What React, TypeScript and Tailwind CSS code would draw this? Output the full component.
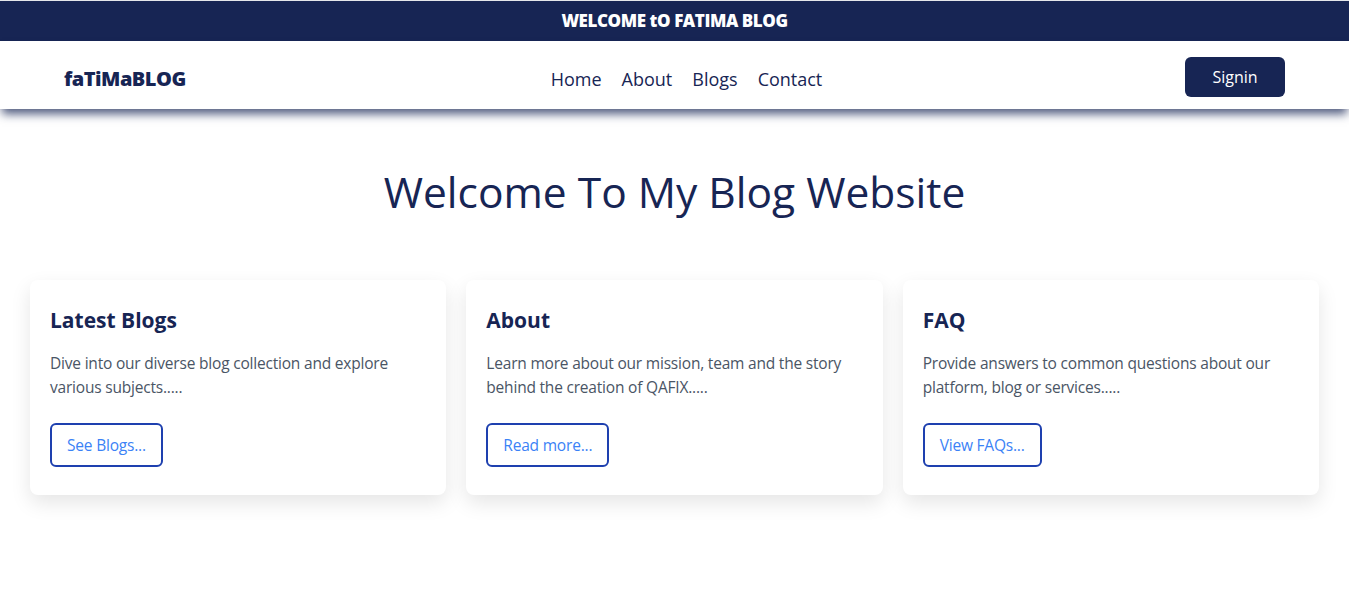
import React from 'react'

const cards = [
  {
    title: 'Latest Blogs',
    text: 'Dive into our diverse blog collection and explore various subjects.....',
    button: 'See Blogs...',
  },
  {
    title: 'About',
    text: 'Learn more about our mission, team and the story behind the creation of QAFIX.....',
    button: 'Read more...',
  },
  {
    title: 'FAQ',
    text: 'Provide answers to common questions about our platform, blog or services.....',
    button: 'View FAQs...',
  },
]

export default function App() {
  return (
    <div className="min-h-screen bg-white font-['Segoe_UI','Open_Sans',sans-serif] border-t border-gray-200">
      {/* Top banner */}
      <div className="h-10 bg-[#172554] flex items-center justify-center">
        <p className="text-white text-[17px] font-black tracking-tight font-['Open_Sans',sans-serif]">
          WELCOME tO FATIMA BLOG
        </p>
      </div>

      {/* Navbar */}
      <nav className="relative z-10 h-[68px] bg-white flex items-center pl-16 pr-16 shadow-[0_7px_9px_-2px_rgba(23,37,84,0.75)]">
        <span className="text-[20px] font-extrabold text-[#172554] tracking-tight w-[124px] mt-2 whitespace-nowrap">faTiMaBLOG</span>
        <ul className="flex-1 flex items-center justify-center gap-5 text-[18px] text-[#172554] font-medium mt-2">
          <li>Home</li>
          <li>About</li>
          <li>Blogs</li>
          <li>Contact</li>
        </ul>
        <button className="w-[100px] h-10 bg-[#172554] text-white text-base rounded-md mt-1">Signin</button>
      </nav>

      {/* Hero */}
      <h1 className="text-center text-[42.5px] text-[#172554] mt-[56px] leading-tight">
        Welcome To My Blog Website
      </h1>

      {/* Cards */}
      <div className="grid grid-cols-3 gap-5 px-[30px] mt-[62px]">
        {cards.map((c) => (
          <div key={c.title} className="bg-white rounded-lg shadow-[0_8px_20px_rgba(0,0,0,0.1)] p-5 pt-[24px] h-[215px]">
            <h2 className="text-[21px] font-bold text-[#172554] leading-8">{c.title}</h2>
            <p className="mt-[15px] text-[15.5px] tracking-[-0.2px] text-gray-600 leading-6">{c.text}</p>
            <button className="mt-[24px] h-11 px-[15px] border-2 border-[#1e40af] rounded-md text-[#3b82f6] text-[15.5px] tracking-[-0.2px]">
              {c.button}
            </button>
          </div>
        ))}
      </div>
    </div>
  )
}
